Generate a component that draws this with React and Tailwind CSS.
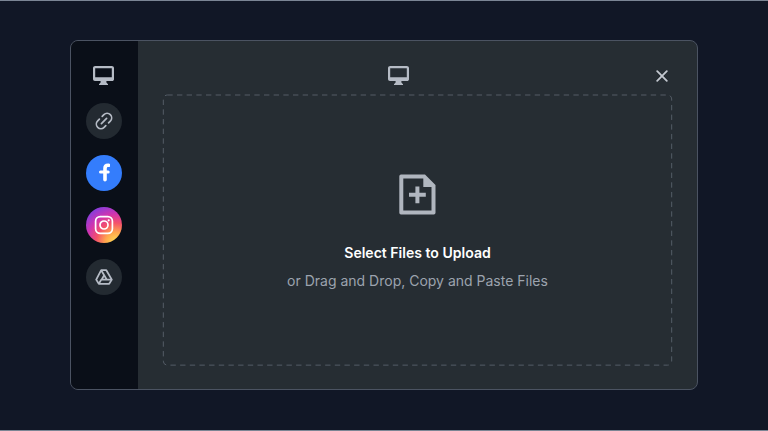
function Monitor() {
  return (
    <svg className="block h-[20px] w-[22px]" viewBox="0 0 22 20" aria-hidden="true">
      <path fillRule="evenodd" fill="#b5bbc5" d="M2.2 0H18.8C20 0 21 .8 21 2V13.2C21 14.4 20.2 15 19 15H13.4V16.6L15 18.2V19H6V18.2L7.6 16.6V15H2C.8 15 0 14.2 0 13V2C0 .8 1 0 2.2 0ZM2.2 2.2V11.2H18.8V2.2Z" />
    </svg>
  );
}

function LinkIcon() {
  return (
    <svg className="size-[18px]" viewBox="0 0 18 18" fill="none" stroke="#b5bbc5" strokeWidth="1.7" strokeLinecap="round" aria-hidden="true">
      <path d="M6.4 11.6 11.6 6.4" />
      <path d="M7.2 4.4 8.9 2.7a4.5 4.5 0 0 1 6.4 6.4L13.6 10.8" />
      <path d="M4.4 7.2 2.7 8.9A4.5 4.5 0 0 0 9.1 15.3L10.8 13.6" />
    </svg>
  );
}

function Facebook() {
  return (
    <svg className="h-[19px] w-[11px]" viewBox="0 0 11 18" fill="none" stroke="#fff" strokeWidth="3.6" aria-hidden="true">
      <path d="M9.6 1.8H9C6.8 1.8 6 2.9 6 4.7V16.2" strokeLinecap="round" />
      <path d="M1.5 8.5H9.2" strokeWidth="3" strokeLinecap="round" />
    </svg>
  );
}

function Instagram() {
  return (
    <svg className="size-[20px]" viewBox="0 0 20 20" fill="none" stroke="#fff" strokeWidth="1.7" aria-hidden="true">
      <rect x="1.6" y="1.6" width="16.8" height="16.8" rx="4.6" />
      <circle cx="10" cy="10" r="4" />
      <circle cx="14.7" cy="5.3" r="1.1" fill="#fff" stroke="none" />
    </svg>
  );
}

function Drive() {
  return (
    <svg className="h-[16px] w-[18px]" viewBox="0 0 18 16" fill="none" stroke="#b5bbc5" strokeWidth="1.8" strokeLinejoin="round" aria-hidden="true">
      <path d="M6.2 1.2H11.3L16.8 10.6 14.2 14.8H3.8L1.2 10.6Z" />
      <path d="M6.2 1.2 11.8 10.6M11.3 10.6H6.3L3.8 14.8M6.6 10.6 9.2 6.2M11.3 10.6H16.8" />
    </svg>
  );
}

function FilePlus() {
  return (
    <svg className="block h-[41px] w-[37px]" viewBox="0 0 37 41" aria-hidden="true">
      <path fillRule="evenodd" fill="#b0b6bf" d="M2 .5H26L36.5 11V38.8Q36.5 40.5 34.8 40.5H2Q.3 40.5 .3 38.8V2.2Q.3.5 2 .5ZM4.3 4.5V36.5H32.5V13H24.3V4.5Z" />
      <path d="M18.4 12.5V29.2M10 20.8H26.8" stroke="#b0b6bf" strokeWidth="4" />
    </svg>
  );
}

const circle = "flex size-9 items-center justify-center rounded-full";

export default function App() {
  return (
    <main className="h-[431px] w-[768px] overflow-hidden border-y border-[#7b8594] bg-[#111726] pt-[39px] pl-[70px] font-['Inter',sans-serif]">
      <section className="flex h-[350px] w-[628px] overflow-hidden rounded-lg border border-[#4b5362] bg-[#262d33]">
        <aside className="flex w-[67px] shrink-0 flex-col items-center bg-[#0a0f18] pt-[25px] pr-px">
          <button aria-label="Device" className="mb-[16.5px]"><Monitor /></button>
          <div className="flex flex-col gap-4">
            <button aria-label="Link" className={`${circle} bg-[#232a31]`}><LinkIcon /></button>
            <button aria-label="Facebook" className={`${circle} bg-[#347dfc]`}><Facebook /></button>
            <button aria-label="Instagram" className={`${circle} bg-[radial-gradient(circle_at_82%_98%,#ffdf55_0%,#ffa64d_22%,#f4516a_42%,#cf34b0_62%,#7b3fe4_88%)]`}><Instagram /></button>
            <button aria-label="Google Drive" className={`${circle} bg-[#232a31]`}><Drive /></button>
          </div>
        </aside>
        <div className="flex flex-1 flex-col px-6 pb-6">
          <header className="grid h-[54px] grid-cols-3 items-start pt-[25px]">
            <span />
            <div className="ml-[56px]"><Monitor /></div>
            <button aria-label="Close" className="mt-[3.5px] mr-[5px] justify-self-end">
              <svg className="block size-3" viewBox="0 0 12 12" fill="none" stroke="#c3c8d0" strokeWidth="1.8" strokeLinecap="round">
                <path d="M1.2 1.2 10.8 10.8M10.8 1.2 1.2 10.8" />
              </svg>
            </button>
          </header>
          <div className="relative flex h-[271px] w-[511px] flex-col items-center pt-[79px]">
            <svg className="absolute inset-0 size-full overflow-visible" viewBox="0 0 511 271" fill="none" aria-hidden="true">
              <rect x=".5" y="0" width="510" height="271" rx="4" stroke="#545c66" strokeDasharray="5.4 4.3" />
            </svg>
            <FilePlus />
            <h1 className="mt-[28px] text-[14.05px] leading-5 font-semibold whitespace-nowrap text-white">Select Files to Upload</h1>
            <p className="mt-2 text-[14px] leading-5 whitespace-nowrap text-[#9ca3ae]">or Drag and Drop, Copy and Paste Files</p>
          </div>
        </div>
      </section>
    </main>
  );
}
